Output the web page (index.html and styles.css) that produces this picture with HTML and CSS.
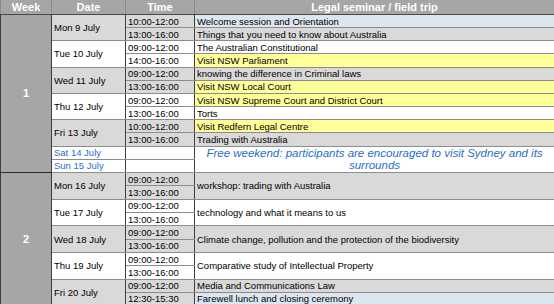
FILE: index.html
```html
<!DOCTYPE html>
<html>
<head>
<meta charset="utf-8">
<link rel="stylesheet" href="styles.css">
</head>
<body>
<table class="sched">
  <colgroup>
    <col class="c-week"><col class="c-date"><col class="c-time"><col class="c-legal">
  </colgroup>
  <thead>
    <tr class="hrow"><th>Week</th><th>Date</th><th>Time</th><th>Legal seminar / field trip</th></tr>
  </thead>
  <tbody class="wk wk1">
    <tr class="day-top">
      <td class="week" rowspan="12">1</td>
      <td class="date g" rowspan="2">Mon 9 July</td>
      <td class="time g">10:00-12:00</td><td class="legal b">Welcome session and Orientation</td>
    </tr>
    <tr><td class="time g">13:00-16:00</td><td class="legal g">Things that you need to know about Australia</td></tr>
    <tr class="day-top">
      <td class="date w" rowspan="2">Tue 10 July</td>
      <td class="time w">09:00-12:00</td><td class="legal w">The Australian Constitutional</td>
    </tr>
    <tr><td class="time w">14:00-16:00</td><td class="legal y">Visit NSW Parliament</td></tr>
    <tr class="day-top">
      <td class="date g" rowspan="2">Wed 11 July</td>
      <td class="time g">09:00-12:00</td><td class="legal g">knowing the difference in Criminal laws</td>
    </tr>
    <tr><td class="time g">13:00-16:00</td><td class="legal y">Visit NSW Local Court</td></tr>
    <tr class="day-top">
      <td class="date w" rowspan="2">Thu 12 July</td>
      <td class="time w">09:00-12:00</td><td class="legal y">Visit NSW Supreme Court and District Court</td>
    </tr>
    <tr><td class="time w">13:00-16:00</td><td class="legal w">Torts</td></tr>
    <tr class="day-top">
      <td class="date g" rowspan="2">Fri 13 July</td>
      <td class="time g">10:00-12:00</td><td class="legal y">Visit Redfern Legal Centre</td>
    </tr>
    <tr><td class="time g">13:00-16:00</td><td class="legal g">Trading with Australia</td></tr>
    <tr class="day-top">
      <td class="date w blue single">Sat 14 July</td>
      <td class="time w"></td>
      <td class="legal w free" rowspan="2">Free weekend: participants are encouraged to visit Sydney and its surrounds</td>
    </tr>
    <tr><td class="date w blue single">Sun 15 July</td><td class="time w"></td></tr>
  </tbody>
  <tbody class="wk wk2">
    <tr class="day-top">
      <td class="week" rowspan="10">2</td>
      <td class="date g" rowspan="2">Mon 16 July</td>
      <td class="time g">09:00-12:00</td><td class="legal g" rowspan="2">workshop: trading with Australia</td>
    </tr>
    <tr><td class="time g">13:00-16:00</td></tr>
    <tr class="day-top">
      <td class="date w" rowspan="2">Tue 17 July</td>
      <td class="time w">09:00-12:00</td><td class="legal w" rowspan="2">technology and what it means to us</td>
    </tr>
    <tr><td class="time w">13:00-16:00</td></tr>
    <tr class="day-top">
      <td class="date g" rowspan="2">Wed 18 July</td>
      <td class="time g">09:00-12:00</td><td class="legal g" rowspan="2">Climate change, pollution and the protection of the biodiversity</td>
    </tr>
    <tr><td class="time g">13:00-16:00</td></tr>
    <tr class="day-top">
      <td class="date w" rowspan="2">Thu 19 July</td>
      <td class="time w">09:00-12:00</td><td class="legal w" rowspan="2">Comparative study of Intellectual Property</td>
    </tr>
    <tr><td class="time w">13:00-16:00</td></tr>
    <tr class="day-top">
      <td class="date g" rowspan="2">Fri 20 July</td>
      <td class="time g">09:00-12:00</td><td class="legal g">Media and Communications Law</td>
    </tr>
    <tr><td class="time g">12:30-15:30</td><td class="legal b">Farewell lunch and closing ceremony</td></tr>
  </tbody>
</table>
</body>
</html>
```

FILE: styles.css
```css
html, body {
  margin: 0;
  padding: 0;
  background: #ffffff;
}

.sched {
  border-collapse: collapse;
  table-layout: fixed;
  width: 554px;
  font-family: "Liberation Sans", Arial, sans-serif;
  font-size: 9.5px;
  color: #000000;
}

.c-week { width: 51px; }
.c-date { width: 74px; }
.c-time { width: 69px; }
.c-legal { width: 360px; }

.hrow th {
  height: 14px;
  padding: 0;
  background: #a6a6a6;
  color: #ffffff;
  font-size: 11px;
  font-weight: bold;
  line-height: 13px;
  text-align: center;
  border-left: 1px solid #8a8a8a;
  border-right: 1px solid #8a8a8a;
  border-bottom: 1px solid #4a4a4a;
}

.sched td {
  padding: 0 0 0 2px;
  line-height: 11px;
  white-space: nowrap;
  overflow: hidden;
  vertical-align: middle;
  border-top: 1px solid #8c8c8c;
  border-bottom: 1px solid #8c8c8c;
  border-left: 1px solid #3e3e3e;
  border-right: 1px solid #3e3e3e;
}

.wk1 tr { height: 13.17px; }
.wk2 tr { height: 13.33px; }

.sched tr.day-top td { border-top: 1px solid #3e3e3e; }
.wk2 tr:first-child td { border-top: 1px solid #2a2a2a; }

.sched td.week {
  background: #a6a6a6;
  color: #ffffff;
  font-weight: bold;
  font-size: 11px;
  line-height: 11px;
  text-align: center;
  padding: 0;
  border-top: 1px solid #2a2a2a;
  border-bottom: 1px solid #2a2a2a;
}

.sched td.date { padding-left: 2px; }
.sched td.legal { padding-left: 2px; }

.g { background: #d9d9d9; }
.w { background: #ffffff; }
.y { background: #ffff99; }
.b { background: #dce6f1; }

.sched td.blue { color: #1f6fc4; }

.sched td.free {
  color: #1f6fc4;
  font-style: italic;
  font-size: 11.5px;
  line-height: 12.5px;
  white-space: normal;
  text-align: center;
  padding: 0 6px;
}
```
